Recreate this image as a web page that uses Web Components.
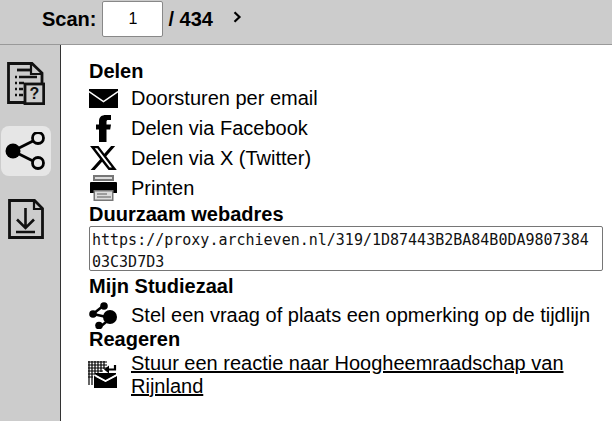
<!DOCTYPE html>
<html>
<head>
<meta charset="utf-8">
<style>
html, body { margin: 0; height: 100%; overflow: hidden; }
body { font: 20px "Liberation Sans", Arial, sans-serif; color: #000; background: #fff; }
</style>
</head>
<body>
<scan-page></scan-page>

<template id="scan-bar-tpl">
  <style>
    :host { display: flex; align-items: center; background: #ccc; border-bottom: 1px solid #999; padding: 0 0 6px 42px; box-sizing: border-box; height: 45px; font-weight: bold; }
    .box { width: 61px; height: 36px; box-sizing: border-box; margin: 0 5px 0 6px; background: #fff; border: 1px solid #888; border-radius: 2px; display: flex; align-items: center; justify-content: center; font-weight: normal; font-size: 16px; }
    svg { margin-left: 20px; margin-top: -4px; }
  </style>
  <span>Scan:</span><span class="box">1</span><span>/ 434</span>
  <svg width="9" height="12" viewBox="0 0 9 12"><path d="M1.500 1.200 6.500 6 1.500 10.800" fill="none" stroke="#000" stroke-width="2.200"/></svg>
</template>

<template id="side-tabs-tpl">
  <style>
    :host { display: flex; flex-direction: column; gap: 18px; width: 61px; flex: none; background: #ccc; border-right: 1px solid #333; padding: 13px 0 0 1px; box-sizing: border-box; }
    .tab { width: 50px; height: 50px; display: flex; align-items: center; justify-content: center; border-radius: 8px; }
    .on { background: #e6e6e6; }
    svg { display: block; }
  </style>
  <div class="tab">
    <svg width="38" height="43" viewBox="0 0 38 43" fill="none" stroke="#111" stroke-width="2.800">
      <path d="M17 40.500H1.500v-39H25L35 11v10"/>
      <path d="M24 1.500V12h11" stroke-width="2.200"/>
      <path d="M10 8h15" stroke-width="2.800"/>
      <path d="M8 15h2M12 15h18M8 21h2M12 21h5M8 27h2M12 27h4M8 33h2M12 33h4" stroke-width="2.400"/>
      <rect x="18" y="22" width="18.700" height="19.700" stroke-width="2.800" fill="#ccc"/>
      <text x="27.500" y="37" font-family="Liberation Sans" font-weight="bold" font-size="16" fill="#111" stroke="none" text-anchor="middle">?</text>
    </svg>
  </div>
  <div class="tab on">
    <svg width="42" height="38" viewBox="0 0 42 38" fill="none" stroke="#000" stroke-width="2.800">
      <path d="M8 19 28 9M8 19l20 10"/>
      <circle cx="8" cy="19" r="7.500" fill="#000" stroke="none"/>
      <circle cx="33" cy="6" r="5.500"/><circle cx="33" cy="31" r="5.500"/>
    </svg>
  </div>
  <div class="tab">
    <svg width="36" height="40" viewBox="0 0 36 40" fill="none" stroke="#111" stroke-width="2.800">
      <path d="M1.500 1.500h25l8 8v29h-33z"/><path d="M26 1.500V10h8.500" stroke-width="2.200"/>
      <path d="M17.500 9v20M9 20.500l8.500 8.500 8.500-8.500M8 33h19" stroke-width="2.600"/>
    </svg>
  </div>
</template>

<template id="share-row-tpl">
  <style>
    :host { display: flex; height: 30px; align-items: center; margin-left: -1px; }
    .icon { width: 30px; height: 30px; margin-right: 13px; flex: none; display: flex; align-items: center; justify-content: center; }
    .txt { line-height: 23px; }
    :host([link]) { height: 47px; }
    :host([link]) .txt { text-decoration: underline; }
  </style>
  <span class="icon"><slot name="icon"></slot></span>
  <span class="txt"><slot></slot></span>
</template>

<template id="share-panel-tpl">
  <style>
    :host { display: block; flex: 1; padding: 15px 9px 0 28px; box-sizing: border-box; min-width: 0; }
    h3 { margin: 0; font-size: 20px; line-height: 23px; font-weight: bold; }
    .url { border: 1px solid #767676; border-radius: 2px; font: 15px/22px "DejaVu Sans Mono", monospace; padding: 2px 9px 0 2px; height: 45px; box-sizing: border-box; word-break: break-all; margin: 0 0 4px; color: #111; }
    .gap { margin-top: 2px; }
    .tight { margin-top: -2px; }
    svg { display: block; }
  </style>
  <h3>Delen</h3>
  <share-row>
    <svg slot="icon" width="29" height="19" viewBox="0 0 29 19"><rect width="29" height="19" fill="#000"/><path d="M0 2.500 14.500 12.500 29 2.500" fill="none" stroke="#fff" stroke-width="1.500"/></svg>
    Doorsturen per email
  </share-row>
  <share-row>
    <svg slot="icon" width="15" height="27" viewBox="0 0 15 27"><path d="M3 27V14.500H0V9.500h3V6.500C3 2 5.500 0 10 0h5v5h-3C11 5 10.500 5.600 10.500 6.800V9.500H15l-.8 5h-3.700V27z" fill="#000"/></svg>
    Delen via Facebook
  </share-row>
  <share-row>
    <svg slot="icon" width="27" height="26" viewBox="1.200 2.200 21.800 19.600"><path d="M18.244 2.250h3.308l-7.227 8.260 8.502 11.240H16.170l-5.214-6.817L4.990 21.750H1.680l7.730-8.835L1.254 2.250H8.080l4.713 6.231zm-1.161 17.520h1.833L7.084 4.126H5.117z" fill="#000"/></svg>
    Delen via X (Twitter)
  </share-row>
  <share-row>
    <svg slot="icon" width="27" height="26" viewBox="0 0 27 26">
      <rect x="3" y="0" width="21" height="6" fill="#777"/><rect x="5" y="2" width="17" height="2" fill="#ddd"/>
      <path d="M1 7h25q1 0 1 1v10h-4v-3H4v3H0V8q0-1 1-1z" fill="#000"/>
      <rect x="3.500" y="15" width="20" height="11" fill="#777"/><rect x="5" y="16.500" width="17" height="8" fill="#ddd"/>
      <path d="M7 19h10M7 22h14" stroke="#888" stroke-width="1.500"/>
    </svg>
    Printen
  </share-row>
  <h3>Duurzaam webadres</h3>
  <div class="url">https://proxy.archieven.nl/319/1D87443B2BA84B0DA980738403C3D7D3</div>
  <h3>Mijn Studiezaal</h3>
  <share-row class="gap">
    <svg slot="icon" width="28" height="28" viewBox="0 0 28 28" fill="#000"><path d="M4 13 14 5M4 13l18 4M22 17 11 26" stroke="#000" stroke-width="2.500"/><circle cx="4" cy="13" r="3.800"/><circle cx="15" cy="5" r="3.800"/><circle cx="21" cy="16" r="7"/><circle cx="10" cy="24.500" r="3.800"/></svg>
    Stel een vraag of plaats een opmerking op de tijdlijn
  </share-row>
  <h3 class="tight">Reageren</h3>
  <share-row link>
    <svg slot="icon" width="30" height="27" viewBox="0 0 30 27">
      <path d="M0 1h19M0 4h19M0 7h19M0 10h15M0 13h8M0 16h5M1 0v24M4 0v24M7 0v18M10 0v12M13 0v11M16 0v8" stroke="#000" stroke-width="1.200"/>
      <path d="M6 15 17.500 21 29 15v12H6z" fill="#000"/>
      <path d="M7 12h21v2L17.500 19.500 7 14z" fill="#000"/>
      <path d="M6.500 14 17.500 20 28.500 14" fill="none" stroke="#fff" stroke-width="1.500"/>
      <path d="M20 8.500h7V4" fill="none" stroke="#000" stroke-width="2.200"/>
      <path d="M16 8.500l5-4v8z" fill="#000"/>
    </svg>
    Stuur een reactie naar Hoogheemraadschap van Rijnland
  </share-row>
</template>

<template id="scan-page-tpl">
  <style>
    :host { display: flex; flex-direction: column; height: 421px; width: 612px; }
    .main { display: flex; flex: 1; min-height: 0; }
  </style>
  <scan-bar></scan-bar>
  <div class="main">
    <side-tabs></side-tabs>
    <share-panel></share-panel>
  </div>
</template>

<script>
class TplElement extends HTMLElement {
    constructor() {
        super();
        const tpl = document.getElementById(this.constructor.tplId);
        this.attachShadow({ mode: 'open' }).appendChild(tpl.content.cloneNode(true));
    }
}
class ScanBar extends TplElement { static tplId = 'scan-bar-tpl'; }
class SideTabs extends TplElement { static tplId = 'side-tabs-tpl'; }
class ShareRow extends TplElement { static tplId = 'share-row-tpl'; }
class SharePanel extends TplElement { static tplId = 'share-panel-tpl'; }
class ScanPage extends TplElement { static tplId = 'scan-page-tpl'; }

customElements.define('scan-bar', ScanBar);
customElements.define('side-tabs', SideTabs);
customElements.define('share-row', ShareRow);
customElements.define('share-panel', SharePanel);
customElements.define('scan-page', ScanPage);
</script>
</body>
</html>
